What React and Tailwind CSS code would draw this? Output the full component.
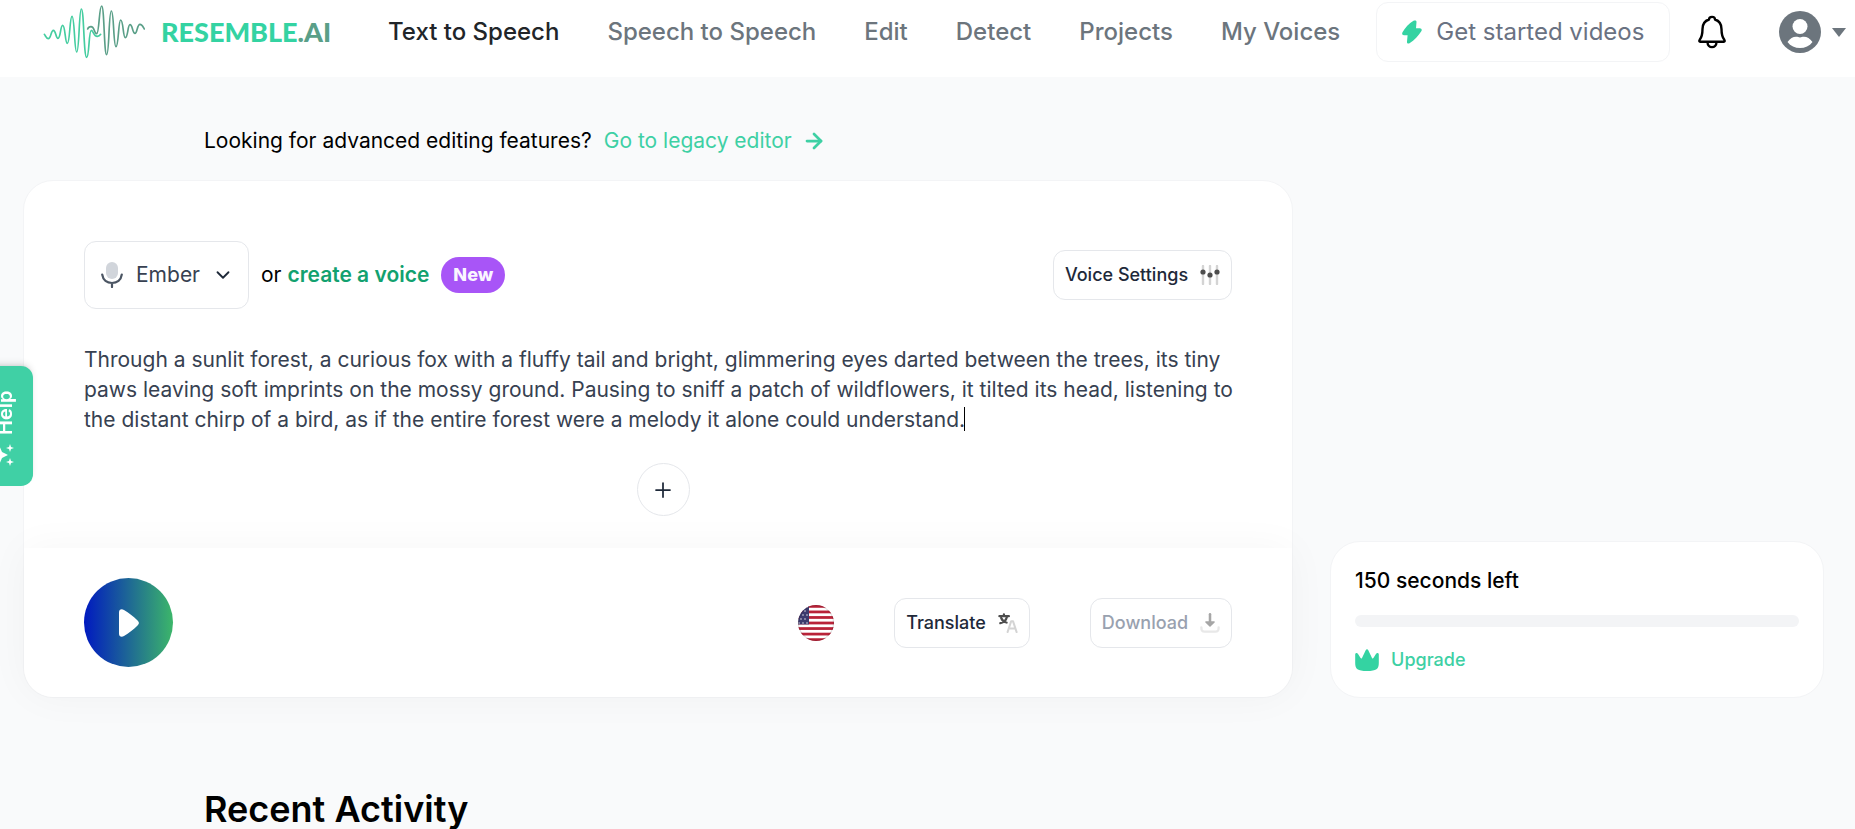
import React from 'react';
import { ArrowRight, ChevronDown, Plus } from 'lucide-react';

const NAV_LINKS = ['Text to Speech', 'Speech to Speech', 'Edit', 'Detect', 'Projects', 'My Voices'];

const SAMPLE_TEXT =
  'Through a sunlit forest, a curious fox with a fluffy tail and bright, glimmering eyes darted between the trees, its tiny paws leaving soft imprints on the mossy ground. Pausing to sniff a patch of wildflowers, it tilted its head, listening to the distant chirp of a bird, as if the entire forest were a melody it alone could understand.';

const Logo = () => (
  <a href="#home" aria-label="Resemble.AI" className="flex shrink-0 items-center gap-4">
    <svg viewBox="9 12 306 168" className="h-14 w-[102px]" fill="none" strokeWidth="5" strokeLinecap="round">
      <path
        stroke="#45cda0"
        d="M13 103C17 108 19 116 25 116C33 116 33 91 40 91C48 91 47 115 54 115C62 115 61 76 68 76C76 76 75 130 82 130C90 130 89 49 96 49C104 49 103 156 110 156C118 156 117 27 124 27C132 27 131 172 140 172C148 172 146 91 154 91C160 91 160 109 172 109C177 109 180 106 182 103"
      />
      <path
        stroke="#5a9f88"
        d="M143 87C145 82 149 80 153 80C164 80 162 101 170 101C178 101 177 18 185 18C193 18 192 164 200 164C208 164 206 33 214 33C222 33 220 140 228 140C236 140 235 60 242 60C250 60 249 113 256 113C264 113 263 74 270 74C278 74 277 100 285 100C292 100 291 73 300 73C306 73 309 80 313 87"
      />
    </svg>
    <span className="w-[168px] font-[Lato,sans-serif] text-[27px] leading-8 font-black text-[#34d3a2]">
      RESEMBLE<span className="text-[#5a9f88]">.AI</span>
    </span>
  </a>
);

const BoltIcon = () => (
  <svg viewBox="0 0 20 24" className="h-6 w-5 shrink-0" fill="#34d3a2">
    <path d="M11.5.8C13 0 14.600.5 14.500 2L14 8.300H17.800C19.600 8.300 20.200 10 19.300 11.300C16.500 15.500 12.500 20.500 7.500 23.300C6 24 4.900 23.200 5 21.800L5.600 15.300H2C.3 15.300-.3 13.700.5 12.300C3 8 7 3.300 11.500.8Z" />
  </svg>
);

const BellIcon = () => (
  <svg viewBox="0 0 28 34" className="h-[34px] w-7" fill="none" stroke="#000" strokeWidth="2.4" strokeLinejoin="round">
    <path d="M11 4.500C11 1 17 1 17 4.500C21.500 6 23.500 10 23.500 14C23.500 20 24.500 22.500 26.300 24.800C27 26 26.700 26.700 25.800 26.700H2.200C1.300 26.700 1 26 1.700 24.800C3.500 22.500 4.500 20 4.500 14C4.500 10 6.500 6 11 4.500Z" />
    <path d="M9.500 27C9.500 33.800 18.500 33.800 18.500 27" />
  </svg>
);

const UserIcon = () => (
  <svg viewBox="0 0 42 42" className="h-[42px] w-[42px]">
    <circle cx="21" cy="21" r="21" fill="#6c757d" />
    <circle cx="21" cy="15.500" r="7.500" fill="#fff" />
    <path fill="#fff" d="M8.500 31C11 27.500 14 25.800 17 25.800C19 25.800 19.500 26.500 21 26.500C22.500 26.500 23 25.800 25 25.800C28 25.800 31 27.500 33.500 31C30.500 35 26 37 21 37C16 37 11.500 35 8.500 31Z" />
  </svg>
);

const MicIcon = () => (
  <svg viewBox="0 0 22 26" className="h-[26px] w-[22px]" fill="none">
    <rect x="5" y="0" width="12" height="17" rx="6" fill="#d1d5db" />
    <path d="M1.200 12.500C2 18 6 21 11 21C16 21 20 18 20.800 12.500M11 21V25" stroke="#4b5563" strokeWidth="2.200" strokeLinecap="round" />
  </svg>
);

const SlidersIcon = () => (
  <svg viewBox="0 0 20 20" className="h-5 w-5">
    <path d="M3 1V19M10 1V19M17 1V19" stroke="#d4d4d4" strokeWidth="2.400" strokeLinecap="round" />
    <circle cx="3" cy="7" r="2.600" fill="#4d4d4d" />
    <circle cx="10" cy="10" r="2.600" fill="#4d4d4d" />
    <circle cx="17" cy="7" r="2.600" fill="#4d4d4d" />
  </svg>
);

const TranslateIcon = () => (
  <svg viewBox="0 0 22 22" className="h-[22px] w-5" fill="none" strokeLinecap="round" strokeLinejoin="round">
    <path d="M1.500 3.500H12M6.500 1.500V3.500M2.500 11.200C6 10.500 9 8 10 3.800M3.500 5.500C4.500 8 7 10 9.500 10.500" stroke="#4d4d4d" strokeWidth="2.400" />
    <path d="M10.500 21L14.500 9H16.500L20.500 21M12 17H19" stroke="#d4d4d4" strokeWidth="2.200" />
  </svg>
);

const DownloadIcon = () => (
  <svg viewBox="0 0 22 22" className="h-[22px] w-5" fill="none" strokeLinecap="round" strokeLinejoin="round">
    <path d="M1.500 16C1.500 19.500 2 20.500 5 20.500H17C20 20.500 20.500 19.500 20.500 16" stroke="#e8e8e8" strokeWidth="2.600" />
    <path d="M11 1.500V11" stroke="#a6a6a6" strokeWidth="2.800" />
    <path d="M6.500 9.800H15.500L11 14.300Z" fill="#a6a6a6" stroke="#a6a6a6" strokeWidth="1.600" />
  </svg>
);

const CrownIcon = () => (
  <svg viewBox="0 0 24 22" className="h-[22px] w-6" fill="#34d3a2">
    <path d="M.2 5.500C.2 3.800 2 3.500 2.900 4.800L5.600 9C6 9.600 6.600 9.600 7 8.900L10.700 1.300C11.300 0 12.700 0 13.300 1.300L17 8.900C17.400 9.600 18 9.600 18.400 9L21.100 4.800C22 3.500 23.800 3.800 23.800 5.500V14C23.800 20 21.500 22 12 22C2.500 22 .2 20 .2 14Z" />
  </svg>
);

const PlayIcon = () => (
  <svg viewBox="0 0 20 28" className="h-7 w-5" fill="#fff">
    <path d="M0 3.500C0 .3 2.500-.6 5 1C10 4 14 7 18.300 11.200C20.400 13.200 20.400 14.800 18.300 16.800C14 21 10 24 5 27C2.500 28.600 0 27.700 0 24.500Z" />
  </svg>
);

const SparklesIcon = () => (
  <svg viewBox="0 0 24 22" className="h-[22px] w-6 shrink-0 rotate-180" fill="#fff">
    <path d="M6 1L9 8L15 11L9 14L6 21L3 14L-3 11L3 8Z" />
    <path d="M17 0L18 3L21 4L18 5L17 8L16 5L13 4L16 3Z" />
    <path d="M17 14L18 17L21 18L18 19L17 22L16 19L13 18L16 17Z" />
  </svg>
);

const STARS = [3, 7, 11, 15, 19].flatMap((y, row) =>
  (row % 2 ? [3, 7] : [1, 5, 9]).map((x) => ({ x, y }))
);

const FlagIcon = () => (
  <svg viewBox="0 0 36 36" className="h-9 w-9">
    <clipPath id="flag">
      <circle cx="18" cy="18" r="18" />
    </clipPath>
    <g clipPath="url(#flag)">
      <rect width="36" height="36" fill="#fff" />
      {[0, 1, 2, 3, 4, 5, 6].map((i) => (
        <rect key={i} y={i * 5.54} width="36" height="2.770" fill="#b92238" />
      ))}
      <rect width="11" height="19.400" fill="#3c3b6e" />
      {STARS.map(({ x, y }) => (
        <circle key={`${x}-${y}`} cx={x} cy={y - 1} r="0.700" fill="#fff" />
      ))}
    </g>
    <circle cx="18" cy="18" r="17.500" fill="none" stroke="#000" strokeOpacity="0.150" />
  </svg>
);

const OutlineButton = ({ children, icon, disabled }) => (
  <button
    type="button"
    disabled={disabled}
    className="flex h-[50px] shrink-0 items-center gap-3 rounded-xl border border-gray-200 px-[11px] text-lg font-medium text-gray-800 disabled:text-gray-400"
  >
    {children}
    {icon}
  </button>
);

const Header = () => (
  <header className="flex items-center bg-white pt-[2px] pr-[9px] pb-[15px] pl-[43px]">
    <Logo />
    <nav className="ml-[59px] flex gap-12 text-2xl font-medium whitespace-nowrap">
      {NAV_LINKS.map((label, i) => (
        <a key={label} href="#nav" className={i === 0 ? 'text-[#212529]' : 'text-[#6c757d]'}>
          {label}
        </a>
      ))}
    </nav>
    <button
      type="button"
      className="ml-9 flex h-[60px] shrink-0 items-center gap-[14px] rounded-xl border border-gray-100 px-[25px] text-2xl text-gray-500"
    >
      <BoltIcon />
      Get started videos
    </button>
    <div className="ml-auto flex items-center">
      <button type="button" aria-label="Notifications">
        <BellIcon />
      </button>
      <button type="button" aria-label="Account" className="ml-[53px] flex items-center gap-[11px]">
        <UserIcon />
        <svg viewBox="0 0 14 9" className="h-[9px] w-[14px]" fill="#6c757d">
          <path d="M0 0H14L7 9Z" />
        </svg>
      </button>
    </div>
  </header>
);

const Editor = () => (
  <section className="rounded-[30px] border border-gray-100 bg-white">
    <div className="px-[60px] pt-[60px] pb-8">
      <div className="flex items-center justify-between">
        <div className="flex items-center gap-3 text-[21px]">
          <div className="relative">
            <select
              aria-label="Voice"
              className="h-[68px] w-[165px] appearance-none rounded-xl border border-gray-200 bg-white pl-[51px] text-[21px] text-[#374151]"
            >
              <option>Ember</option>
            </select>
            <span className="pointer-events-none absolute inset-y-0 left-[17px] flex items-center">
              <MicIcon />
            </span>
            <ChevronDown className="pointer-events-none absolute inset-y-0 right-[15px] my-auto h-[22px] w-[22px] text-gray-800" />
          </div>
          <p>
            or{' '}
            <a href="#create" className="font-semibold text-[#12a16f]">
              create a voice
            </a>
          </p>
          <span className="rounded-full bg-[#a855f7] px-3 py-1 text-lg font-extrabold text-purple-50">New</span>
        </div>
        <OutlineButton icon={<SlidersIcon />}>Voice Settings</OutlineButton>
      </div>

      <div className="-mr-[10px] mt-9 flex flex-col items-center">
        <div className="relative w-full">
          <textarea
            aria-label="Script"
            rows={3}
            defaultValue={SAMPLE_TEXT}
            className="block w-full resize-none overflow-hidden text-[21px] leading-[30px] text-[#374151] outline-none"
          />
          <span className="absolute top-[62px] left-[880px] h-6 w-px bg-black" />
        </div>
        <button
          type="button"
          aria-label="Add block"
          className="mt-7 flex h-[53px] w-[53px] items-center justify-center rounded-full border border-gray-200 text-gray-800"
        >
          <Plus className="h-6 w-6" strokeWidth={1.75} />
        </button>
      </div>
    </div>

    <div className="flex items-center rounded-b-[30px] bg-white px-[60px] py-[30px] shadow-[0_0_40px_rgba(0,0,0,0.04)]">
      <button
        type="button"
        aria-label="Play"
        className="flex h-[89px] w-[89px] items-center justify-center rounded-full bg-linear-to-r/srgb from-[#0019c0] to-[#3cb66a]"
      >
        <PlayIcon />
      </button>
      <div className="ml-auto flex items-center gap-[60px]">
        <button type="button" aria-label="Language: English (US)">
          <FlagIcon />
        </button>
        <OutlineButton icon={<TranslateIcon />}>Translate</OutlineButton>
        <OutlineButton icon={<DownloadIcon />} disabled>
          Download
        </OutlineButton>
      </div>
    </div>
  </section>
);

const UsageCard = () => (
  <aside className="self-end rounded-[30px] border border-gray-100 bg-white px-6 pt-6 pb-[23px]">
    <p className="text-[21px] leading-[30px] font-medium">150 seconds left</p>
    <div
      role="progressbar"
      aria-label="Seconds used"
      aria-valuenow={0}
      className="mt-[19px] h-3 rounded-full bg-gray-100"
    />
    <a href="#upgrade" className="mt-[19px] flex items-center gap-3 text-lg leading-7 font-medium text-[#3ed0a4]">
      <CrownIcon />
      Upgrade
    </a>
  </aside>
);

const App = () => (
  <div className="min-h-screen overflow-hidden bg-gray-50 font-[Inter,sans-serif] text-black">
    <Header />
    <main>
      <p className="flex items-center gap-3 pt-[49px] pl-[204px] text-[21px] leading-[30px]">
        Looking for advanced editing features?
        <a href="#legacy" className="flex items-center gap-[10px] text-[#3ed0a4]">
          Go to legacy editor
          <ArrowRight className="h-6 w-6" strokeWidth={2.75} />
        </a>
      </p>
      <div className="mt-6 grid grid-cols-[18fr_7fr] gap-[37px] pr-[31px] pl-[23px]">
        <Editor />
        <UsageCard />
      </div>
      <h2 className="mt-[87px] pl-[204px] text-4xl leading-[48px] font-semibold">Recent Activity</h2>
    </main>

    <button
      type="button"
      className="fixed top-[366px] left-[-23px] flex h-[120px] w-14 rotate-180 items-center justify-center gap-[9px] rounded-l-xl bg-[#40d0a5] pb-[5px] text-xl font-semibold text-white shadow-md [writing-mode:vertical-rl]"
    >
      <SparklesIcon />
      Help
    </button>
  </div>
);

export default App;
